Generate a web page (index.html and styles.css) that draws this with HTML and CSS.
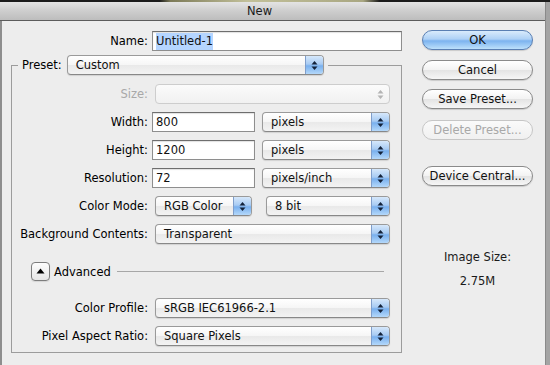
FILE: index.html
```html
<!DOCTYPE html>
<html lang="en">
<head>
    <meta charset="UTF-8">
    <title>New</title>
    <link rel="stylesheet" href="styles.css">
</head>
<body>
    <div class="top-strip"></div>
    <div class="window">
        <div class="titlebar">New</div>

        <div class="dialog">
            <div class="main">
                <div class="row">
                    <span class="label label-name">Name:</span>
                    <div class="textfield field-name"><span class="selected">Untitled-1</span></div>
                </div>

                <fieldset class="preset">
                    <legend class="preset-legend">
                        <span class="legend-label">Preset:</span>
                        <div class="popup popup-preset">
                            <span class="popup-text">Custom</span>
                            <span class="stepper"><svg width="7" height="11" viewBox="0 0 7 11"><polygon points="3.5,1 6.5,4.5 0.5,4.5"/><polygon points="0.5,6.5 6.5,6.5 3.5,10"/></svg></span>
                        </div>
                    </legend>

                    <div class="rows">
                        <div class="row">
                            <span class="label disabled">Size:</span>
                            <div class="popup popup-full is-disabled">
                                <span class="popup-text"></span>
                                <span class="stepper"><svg width="7" height="11" viewBox="0 0 7 11"><polygon points="3.5,1 6.5,4.5 0.5,4.5"/><polygon points="0.5,6.5 6.5,6.5 3.5,10"/></svg></span>
                            </div>
                        </div>
                        <div class="row">
                            <span class="label">Width:</span>
                            <div class="textfield field-num">800</div>
                            <div class="popup popup-unit">
                                <span class="popup-text">pixels</span>
                                <span class="stepper"><svg width="7" height="11" viewBox="0 0 7 11"><polygon points="3.5,1 6.5,4.5 0.5,4.5"/><polygon points="0.5,6.5 6.5,6.5 3.5,10"/></svg></span>
                            </div>
                        </div>
                        <div class="row">
                            <span class="label">Height:</span>
                            <div class="textfield field-num">1200</div>
                            <div class="popup popup-unit">
                                <span class="popup-text">pixels</span>
                                <span class="stepper"><svg width="7" height="11" viewBox="0 0 7 11"><polygon points="3.5,1 6.5,4.5 0.5,4.5"/><polygon points="0.5,6.5 6.5,6.5 3.5,10"/></svg></span>
                            </div>
                        </div>
                        <div class="row">
                            <span class="label">Resolution:</span>
                            <div class="textfield field-num">72</div>
                            <div class="popup popup-unit">
                                <span class="popup-text">pixels/inch</span>
                                <span class="stepper"><svg width="7" height="11" viewBox="0 0 7 11"><polygon points="3.5,1 6.5,4.5 0.5,4.5"/><polygon points="0.5,6.5 6.5,6.5 3.5,10"/></svg></span>
                            </div>
                        </div>
                        <div class="row">
                            <span class="label">Color Mode:</span>
                            <div class="popup popup-mode">
                                <span class="popup-text">RGB Color</span>
                                <span class="stepper"><svg width="7" height="11" viewBox="0 0 7 11"><polygon points="3.5,1 6.5,4.5 0.5,4.5"/><polygon points="0.5,6.5 6.5,6.5 3.5,10"/></svg></span>
                            </div>
                            <div class="popup popup-bits">
                                <span class="popup-text">8 bit</span>
                                <span class="stepper"><svg width="7" height="11" viewBox="0 0 7 11"><polygon points="3.5,1 6.5,4.5 0.5,4.5"/><polygon points="0.5,6.5 6.5,6.5 3.5,10"/></svg></span>
                            </div>
                        </div>
                        <div class="row">
                            <span class="label">Background Contents:</span>
                            <div class="popup popup-full">
                                <span class="popup-text">Transparent</span>
                                <span class="stepper"><svg width="7" height="11" viewBox="0 0 7 11"><polygon points="3.5,1 6.5,4.5 0.5,4.5"/><polygon points="0.5,6.5 6.5,6.5 3.5,10"/></svg></span>
                            </div>
                        </div>
                    </div>

                    <div class="advanced">
                        <span class="disclosure"><svg width="9" height="6" viewBox="0 0 9 6"><polygon points="4.5,0.5 8.5,5.5 0.5,5.5"/></svg></span>
                        <span class="advanced-label">Advanced</span>
                        <span class="advanced-line"></span>
                    </div>

                    <div class="rows rows-advanced">
                        <div class="row">
                            <span class="label">Color Profile:</span>
                            <div class="popup popup-full">
                                <span class="popup-text">sRGB IEC61966-2.1</span>
                                <span class="stepper"><svg width="7" height="11" viewBox="0 0 7 11"><polygon points="3.5,1 6.5,4.5 0.5,4.5"/><polygon points="0.5,6.5 6.5,6.5 3.5,10"/></svg></span>
                            </div>
                        </div>
                        <div class="row">
                            <span class="label">Pixel Aspect Ratio:</span>
                            <div class="popup popup-full">
                                <span class="popup-text">Square Pixels</span>
                                <span class="stepper"><svg width="7" height="11" viewBox="0 0 7 11"><polygon points="3.5,1 6.5,4.5 0.5,4.5"/><polygon points="0.5,6.5 6.5,6.5 3.5,10"/></svg></span>
                            </div>
                        </div>
                    </div>
                </fieldset>
            </div>

            <div class="side">
                <div class="button button-default">OK</div>
                <div class="button btn-cancel">Cancel</div>
                <div class="button btn-save">Save Preset...</div>
                <div class="button btn-delete is-disabled">Delete Preset...</div>
                <div class="button btn-device">Device Central...</div>

                <div class="image-size">
                    <p class="image-size-label">Image Size:</p>
                    <p class="image-size-value">2.75M</p>
                </div>
            </div>
        </div>
    </div>
</body>
</html>
```

FILE: styles.css
```css
:root {
    --window-bg: #ededed;
    --text: #111;
    --text-disabled: #a8a8a8;
    --border: #9a9a9a;
    --groupbox: #9c9c9c;
    --highlight: #b5d5ff;
    --font-ui: "DejaVu Sans", "Liberation Sans", sans-serif;
}

* {
    box-sizing: border-box;
    margin: 0;
    padding: 0;
}

body {
    width: 550px;
    height: 365px;
    overflow: hidden;
    background: #a4a4a4;
    font-family: var(--font-ui);
    font-size: 11.5px;
    color: var(--text);
}

.top-strip {
    height: 2px;
    background: linear-gradient(90deg, #1c1c1c 0, #1c1c1c 29%, #7c7a58 31%, #c2c09a 45%, #a9a782 66%, #1c1c1c 69%, #1c1c1c 100%);
}

.window {
    width: 546px;
    height: 363px;
    background: var(--window-bg);
    border-left: 2px solid #8e8e8e;
    border-right: 1px solid #8a8a8a;
}

.titlebar {
    height: 19px;
    margin-left: -2px;
    padding-right: 26px;
    background: linear-gradient(#e4e4e4, #cfcfcf 45%, #bdbdbd 100%);
    border-bottom: 1px solid #5c5c5c;
    text-align: center;
    line-height: 18px;
    color: #1a1a1a;
}

.dialog {
    display: flex;
    padding-top: 10px;
}

.main {
    width: 400px;
}

.row {
    display: flex;
    align-items: center;
    height: 20px;
}

.label {
    width: 136px;
    text-align: right;
    white-space: nowrap;
    color: #000;
}

.label-name {
    width: 146px;
}

.label.disabled {
    color: var(--text-disabled);
}

/* text fields */
.textfield {
    height: 20px;
    margin-left: 4px;
    padding-left: 3px;
    background: #fff;
    border: 1px solid #8e8e8e;
    border-top-color: #6e6e6e;
    box-shadow: inset 0 1px 1px rgba(0, 0, 0, 0.12);
    line-height: 18px;
    white-space: nowrap;
}

.field-name {
    width: 250px;
}

.field-num {
    width: 103px;
}

.selected {
    background: var(--highlight);
    padding: 1px 0 2px;
}

/* popup buttons */
.popup {
    display: flex;
    height: 20px;
    margin-left: 7px;
    border: 1px solid var(--border);
    border-bottom-color: #888;
    border-radius: 4px;
    background: linear-gradient(#ffffff, #f6f6f6 48%, #e9e9e9 52%, #f3f3f3);
    box-shadow: 0 1px 1px rgba(0, 0, 0, 0.12);
    line-height: 18px;
    white-space: nowrap;
    overflow: hidden;
}

.popup-text {
    flex: 1;
    padding-left: 8px;
}

.stepper {
    display: flex;
    align-items: center;
    justify-content: center;
    width: 18px;
    border-left: 1px solid #7f9ecb;
    background: linear-gradient(#d6e8fb, #a8cbf3 45%, #79b0ee 55%, #b4d8fa);
}

.stepper svg {
    fill: #13223a;
}

.popup.is-disabled {
    border-color: #cdcdcd;
    background: linear-gradient(#fbfbfb, #f1f1f1);
    box-shadow: none;
}

.popup.is-disabled .stepper {
    border-left: none;
    background: transparent;
}

.popup.is-disabled .stepper svg {
    fill: #b4b4b4;
}

.popup-full {
    width: 235px;
}

.popup-unit {
    width: 128px;
}

.popup-mode {
    width: 97px;
}

.popup-bits {
    width: 124px;
    margin-left: 14px;
}

/* preset group */
.preset {
    width: 391px;
    margin: 4px 0 0 9px;
    padding: 9px 0 6px;
    border: 1px solid var(--groupbox);
}

.preset-legend {
    display: flex;
    align-items: center;
    height: 20px;
    margin-left: 6px;
    padding: 0 4px;
}

.legend-label {
    color: #000;
}

.popup-preset {
    width: 257px;
    margin-left: 5px;
}

.rows {
    display: flex;
    flex-direction: column;
    gap: 8px;
}

.advanced {
    display: flex;
    align-items: center;
    height: 19px;
    margin-top: 18px;
    padding-left: 19px;
}

.disclosure {
    display: flex;
    align-items: center;
    justify-content: center;
    width: 19px;
    height: 19px;
    border: 1px solid #7d7d7d;
    border-radius: 4px;
    background: linear-gradient(#fdfdfd, #e6e6e6);
    box-shadow: 0 1px 1px rgba(0, 0, 0, 0.1);
}

.disclosure svg {
    fill: #000;
    margin-top: -1px;
}

.advanced-label {
    margin-left: 4px;
    color: #000;
}

.advanced-line {
    flex: 1;
    height: 1px;
    margin: 0 17px 0 6px;
    background: #a7a7a7;
}

.rows-advanced {
    margin-top: 17px;
}

/* right column */
.side {
    width: 111px;
    margin: -1px 0 0 20px;
}

.button {
    height: 20px;
    border: 1px solid #8a8a8a;
    border-radius: 10px;
    background: linear-gradient(#ffffff, #f3f3f3 48%, #e4e4e4 52%, #f6f6f6);
    box-shadow: 0 1px 1px rgba(0, 0, 0, 0.15);
    text-align: center;
    line-height: 18px;
    white-space: nowrap;
    color: #111;
}

.button-default {
    border-color: #5a7fb3;
    background: linear-gradient(#d9ebfc, #aed1f6 45%, #7cb3ef 55%, #bde0fb);
}

.btn-cancel { margin-top: 10px; }
.btn-save { margin-top: 9px; }
.btn-delete { margin-top: 11px; }
.btn-device { margin-top: 26px; }

.button.is-disabled {
    border-color: #c6c6c6;
    color: var(--text-disabled);
    box-shadow: none;
    background: linear-gradient(#fafafa, #f0f0f0);
}

.image-size {
    margin-top: 64px;
    text-align: center;
    color: #1a1a1a;
}

.image-size-label {
    line-height: 15px;
}

.image-size-value {
    margin-top: 9px;
    line-height: 15px;
}
```
